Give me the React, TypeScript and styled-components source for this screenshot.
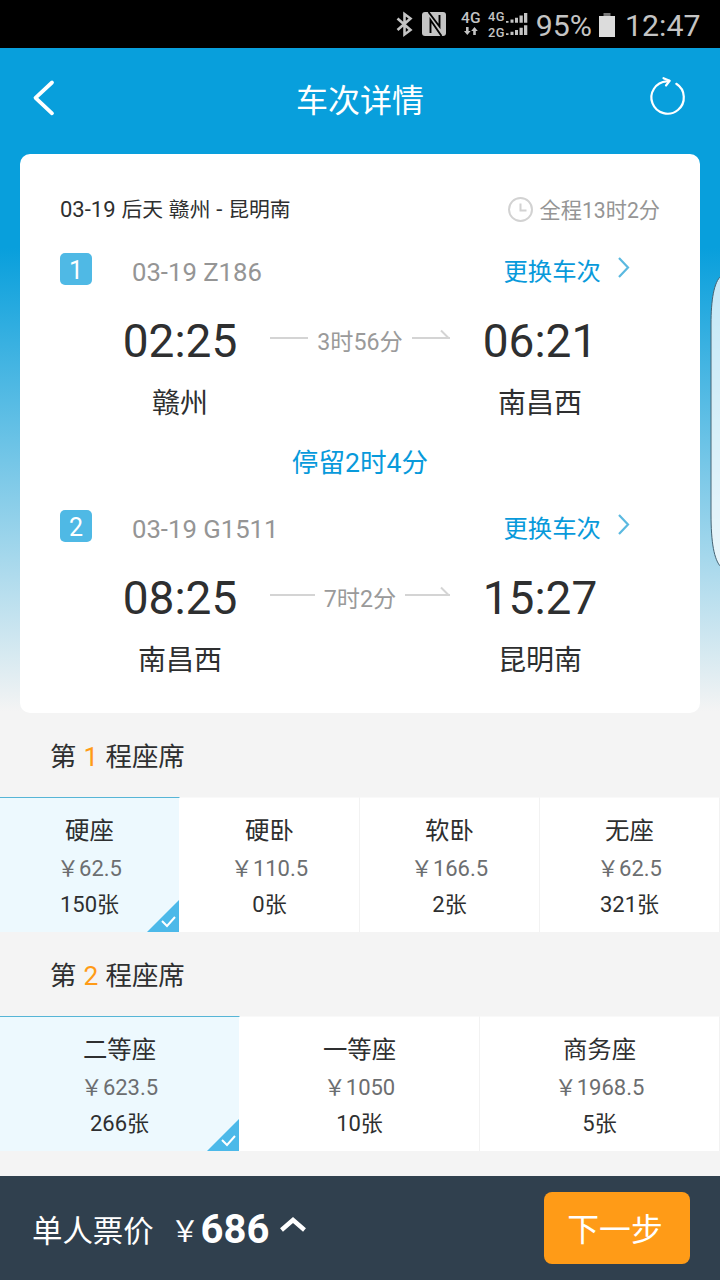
import React from "react";
import styled, { createGlobalStyle } from "styled-components";

const GlobalStyle = createGlobalStyle`
  * { box-sizing: border-box; }
  body {
    margin: 0;
    background: #f4f4f4;
    font-family: Roboto, "Noto Sans CJK SC", sans-serif;
    color: #2e2f30;
  }
`;

const Screen = styled.div`
  position: relative;
  width: 720px;
  height: 1280px;
  overflow: hidden;
  display: flex;
  flex-direction: column;
  background: #f4f4f4;
`;

const StatusBar = styled.div`
  height: 48px;
  flex: none;
  background: #000;
  color: #c4c4c4;
  display: flex;
  align-items: center;
  padding: 2px 21px 0 0;
  justify-content: flex-end;
`;

const StatusIcons = styled.svg`
  display: block;
  flex: none;
`;

const StatusText = styled.span<{ $width: number }>`
  width: ${(p) => p.$width}px;
  font-size: 30.3px;
  line-height: 46px;
  margin-top: 2px;
  white-space: nowrap;
  text-align: right;
`;

const Battery = styled.svg`
  display: block;
  margin: 0 10px 1px 7px;
`;

const Hero = styled.div`
  height: 666px;
  flex: none;
  background: linear-gradient(#089fdc 0, #089fdc 200px, #f4f4f4 664px);
  padding: 0 20px;
`;

const Header = styled.header`
  height: 106px;
  display: flex;
  align-items: center;
  justify-content: space-between;
  padding: 0 12px 6px;
  color: #fff;
`;

const HeaderIcon = styled.svg`
  display: block;
  width: 40px;
  height: 44px;
`;

const Title = styled.h1`
  margin: 5px 0 0 0;
  font-size: 32px;
  line-height: 44px;
  font-weight: 400;
`;

const Card = styled.section`
  height: 559px;
  border-radius: 10px;
  background: #fff;
  padding: 36px 40px 0;
`;

const RouteRow = styled.div`
  display: flex;
  justify-content: space-between;
  align-items: center;
  height: 40px;
  line-height: 41px;
  font-size: 22px;
  word-spacing: 0.4px;
`;

const Places = styled.span`
  font-size: 20.8px;
`;

const Total = styled.div`
  display: flex;
  align-items: center;
  gap: 6px;
  font-size: 21.2px;
  color: #959595;
`;

const Leg = styled.div`
  height: 202px;
`;

const LegHead = styled.div`
  display: flex;
  align-items: center;
  height: 81px;
  padding-top: 3px;
  font-size: 25.7px;
  line-height: 40px;
  color: #959595;
`;

const Badge = styled.span`
  width: 32px;
  height: 32px;
  margin: 0 40px 7px 0;
  border-radius: 5px;
  background: #4fb9e5;
  color: #fff;
  font-size: 25px;
  line-height: 35px;
  text-align: center;
`;

const Change = styled.a`
  display: flex;
  align-items: center;
  margin-left: auto;
  padding-right: 28px;
  color: #089adb;
  font-size: 24.4px;
`;

const Chevron = styled.svg`
  display: block;
  margin: 0 0 10px 15px;
`;

const Trip = styled.div`
  display: grid;
  grid-template-columns: 180px 180px 180px;
  padding-left: 30px;
`;

const Stop = styled.div`
  text-align: center;
`;

const Time = styled.div`
  font-size: 46px;
  line-height: 60px;
  height: 60px;
`;

const City = styled.div`
  font-size: 28px;
  line-height: 40px;
  margin-top: 13px;
`;

const Duration = styled.div`
  display: flex;
  align-items: center;
  gap: 9px;
  height: 58px;
  font-size: 23.2px;
  color: #9a9a9a;
  white-space: nowrap;
`;

const Dash = styled.i`
  flex: 1;
  height: 2px;
  margin-bottom: 4px;
  background: #d4d4d4;
`;

const ArrowLine = styled.div`
  flex: 1;
  display: flex;
  justify-content: flex-end;
  height: 10px;
  margin-bottom: 12px;
  border-bottom: 2px solid #d4d4d4;
`;

const Stay = styled.div`
  height: 55px;
  line-height: 62px;
  text-align: center;
  font-size: 26.6px;
  color: #089adb;
`;

const SeatTitle = styled.h2<{ $height: number }>`
  margin: 0;
  height: ${(p) => p.$height}px;
  padding: 0 50px;
  font-size: 26.4px;
  font-weight: 400;
  line-height: ${(p) => p.$height + 4}px;
  white-space: pre;
  word-spacing: 0.6px;
  em {
    font-style: normal;
    color: #ff9b17;
  }
`;

const SeatRow = styled.div<{ $count: number }>`
  flex: none;
  display: grid;
  grid-template-columns: repeat(${(p) => p.$count}, 1fr);
  height: 135px;
`;

const Seat = styled.div<{ $active?: boolean }>`
  position: relative;
  text-align: center;
  padding: 15px 0 0;
  background: ${(p) => (p.$active ? "#edf9fe" : "#fff")};
  border-top: 1px solid ${(p) => (p.$active ? "#56b5d6" : "#f9f9f9")};
  border-right: 1px solid ${(p) => (p.$active ? "#fff" : "#f2f2f2")};
`;

const SeatName = styled.div`
  font-size: 24.4px;
  line-height: 36px;
  height: 37px;
`;

const SeatPrice = styled.div`
  font-size: 22px;
  line-height: 38px;
  color: #6c6e70;
`;

const SeatCount = styled.div`
  font-size: 22px;
  line-height: 34px;
`;

const Corner = styled.svg`
  position: absolute;
  right: 0;
  bottom: 0;
`;

const Footer = styled.footer`
  margin-top: auto;
  height: 104px;
  display: flex;
  align-items: center;
  padding: 0 30px 0 32px;
  background: #30404e;
  color: #fff;
`;

const FooterLabel = styled.span`
  font-size: 30.4px;
  line-height: 60px;
  margin-top: 8px;
`;

const Yen = styled.span`
  font-size: 29px;
  line-height: 60px;
  margin: 7px 1px 0 17px;
`;

const Amount = styled.strong`
  font-size: 40px;
  line-height: 60px;
  margin-top: 3px;
  font-weight: 700;
`;

const Caret = styled.svg`
  display: block;
  margin: 0 0 6px 10px;
`;

const NextButton = styled.button`
  margin-left: auto;
  width: 146px;
  height: 72px;
  border: 0;
  border-radius: 8px;
  background: #ff9b17;
  color: #fff;
  font: 400 31.8px/70px Roboto, "Noto Sans CJK SC", sans-serif;
  padding: 3px 4px 0 0;
`;

const EdgeHandle = styled.svg`
  position: absolute;
  right: 0;
  top: 270px;
`;

type LegData = {
  no: number;
  train: string;
  depart: string;
  from: string;
  arrive: string;
  to: string;
  duration: string;
};

const legs: LegData[] = [
  { no: 1, train: "03-19 Z186", depart: "02:25", from: "赣州", arrive: "06:21", to: "南昌西", duration: "3时56分" },
  { no: 2, train: "03-19 G1511", depart: "08:25", from: "南昌西", arrive: "15:27", to: "昆明南", duration: "7时2分" },
];

const seatGroups = [
  [
    ["硬座", "62.5", "150张"],
    ["硬卧", "110.5", "0张"],
    ["软卧", "166.5", "2张"],
    ["无座", "62.5", "321张"],
  ],
  [
    ["二等座", "623.5", "266张"],
    ["一等座", "1050", "10张"],
    ["商务座", "1968.5", "5张"],
  ],
];

function LegView({ leg }: { leg: LegData }) {
  return (
    <Leg>
      <LegHead>
        <Badge>{leg.no}</Badge>
        {leg.train}
        <Change>
          更换车次
          <Chevron width="16" height="24" viewBox="0 0 16 24" fill="none" stroke="#5bb9e0" strokeWidth="2.2">
            <path d="M3 3 L12 12.500 L3 22" />
          </Chevron>
        </Change>
      </LegHead>
      <Trip>
        <Stop>
          <Time>{leg.depart}</Time>
          <City>{leg.from}</City>
        </Stop>
        <Duration>
          <Dash />
          {leg.duration}
          <ArrowLine>
            <svg width="10" height="10" viewBox="0 0 10 10" fill="none" stroke="#d4d4d4" strokeWidth="2">
              <path d="M1 1.5 L9 9.5" />
            </svg>
          </ArrowLine>
        </Duration>
        <Stop>
          <Time>{leg.arrive}</Time>
          <City>{leg.to}</City>
        </Stop>
      </Trip>
    </Leg>
  );
}

function SeatGroup({ index }: { index: number }) {
  const seats = seatGroups[index];
  return (
    <>
      <SeatTitle $height={index === 0 ? 83 : 84}>
        第 <em>{index + 1}</em> 程座席
      </SeatTitle>
      <SeatRow $count={seats.length}>
        {seats.map(([name, price, count], i) => (
          <Seat key={name} $active={i === 0}>
            <SeatName>{name}</SeatName>
            <SeatPrice>￥{price}</SeatPrice>
            <SeatCount>{count}</SeatCount>
            {i === 0 && (
              <Corner width="32" height="32" viewBox="0 0 32 32">
                <path d="M0 32 L32 0 V32 Z" fill="#4cb9e9" />
                <path d="M15 21 L20 26 L28 17" fill="none" stroke="#fff" strokeWidth="2" />
              </Corner>
            )}
          </Seat>
        ))}
      </SeatRow>
    </>
  );
}

export default function App() {
  return (
    <Screen>
      <GlobalStyle />
      <StatusBar>
        <StatusIcons width="134" height="46" viewBox="396 2 134 46">
          <path d="M397.5 18.5 L410.5 30 L404.500 34.500 V14 L410.5 18.5 L397.5 30" fill="none" stroke="#c4c4c4" strokeWidth="2.6" />
          <rect x="422" y="12" width="24" height="24" rx="3" fill="#c4c4c4" />
          <path d="M428.500 12 L439.500 26.500 V15 M430.500 33 V20 L441.500 36" fill="none" stroke="#000" strokeWidth="1.900" />
          <g fill="#c4c4c4" fontFamily="Roboto, sans-serif" fontWeight="500">
            <text x="461" y="23" fontSize="15.500" textLength="19.500">4G</text>
            <text x="488" y="21.300" fontSize="12.800" textLength="16.500">4G</text>
            <text x="488" y="36.700" fontSize="12.800" textLength="16.500">2G</text>
          </g>
          <path d="M466 27 h2.600 v4 h2 l-3.300 4 l-3.300 -4 h2z M473.200 35 h2.600 v-4 h2 l-3.300 -4 l-3.300 4 h2z" fill="#c4c4c4" />
          <path
            d="M506 21 h2.500 v1.800 h-2.500z M510.500 19.500 h3 v3.300 h-3z M515 17.800 h3 v5 h-3z M519.500 15.500 h3.300 v7.300 h-3.300z M524 13 h3.300 v9.800 h-3.300z M506 33.200 h2.500 v1.800 h-2.500z M510.500 31.700 h3 v3.300 h-3z M515 30 h3 v5 h-3z M519.500 27.700 h3.300 v7.300 h-3.300z M524 25.200 h3.300 v9.800 h-3.300z"
            fill="#c4c4c4"
          />
        </StatusIcons>
        <StatusText $width={62}>95%</StatusText>
        <Battery width="16" height="24" viewBox="0 0 16 24">
          <rect x="4.500" y="0" width="7" height="3" fill="#777" />
          <rect x="0" y="3" width="16" height="21" fill="#dcdcdc" />
        </Battery>
        <StatusText $width={74}>12:47</StatusText>
      </StatusBar>

      <Hero>
        <Header>
          <HeaderIcon viewBox="0 0 40 44" fill="none" stroke="#fff" strokeWidth="3.800" strokeLinecap="round" strokeLinejoin="round">
            <path d="M20 6.500 L3.500 21.800 L20 37.300" />
          </HeaderIcon>
          <Title>车次详情</Title>
          <HeaderIcon viewBox="0 0 40 44" fill="none" stroke="#fff" strokeWidth="2.200" strokeLinecap="round" strokeLinejoin="round">
            <path d="M28.300 7.800 A16.200 16.200 0 1 1 18.700 5.300 L21.300 4.800" />
            <path d="M15.500 2.200 L21.600 4.800 L18 9.500" />
          </HeaderIcon>
        </Header>

        <Card>
          <RouteRow>
            <span>
              03-19 <Places>后天</Places> <Places>赣州</Places> - <Places>昆明南</Places>
            </span>
            <Total>
              <svg width="26" height="26" viewBox="0 0 26 26" fill="none" stroke="#d2d2d2" strokeWidth="2">
                <circle cx="12.500" cy="12.500" r="11.500" />
                <path d="M12.500 6.500 V13.500 H18.500" />
              </svg>
              全程13时2分
            </Total>
          </RouteRow>
          <LegView leg={legs[0]} />
          <Stay>停留2时4分</Stay>
          <LegView leg={legs[1]} />
        </Card>
      </Hero>

      <SeatGroup index={0} />
      <SeatGroup index={1} />

      <Footer>
        <FooterLabel>单人票价</FooterLabel>
        <Yen>￥</Yen>
        <Amount>686</Amount>
        <Caret width="28" height="18" viewBox="0 0 28 18" fill="none" stroke="#fff" strokeWidth="4.400">
          <path d="M2.500 14 L14 4 L25.500 14" />
        </Caret>
        <NextButton>下一步</NextButton>
      </Footer>

      <EdgeHandle width="10" height="302" viewBox="0 0 10 302">
        <path d="M11 6 C4 12 1 30 1 54 V244 C1 272 4 290 11 297 Z" fill="#fff" fillOpacity="0.75" stroke="#466474" strokeWidth="1" />
      </EdgeHandle>
    </Screen>
  );
}
